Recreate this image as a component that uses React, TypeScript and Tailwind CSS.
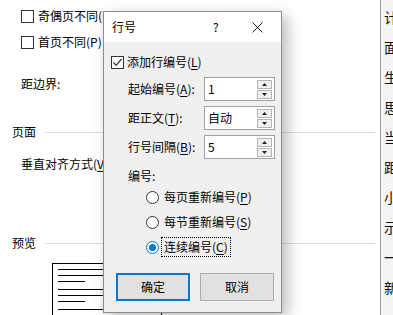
import React from 'react';

const FONT = { fontFamily: '"Noto Sans CJK SC", "Noto Sans", sans-serif' };

function Box({ checked = false }: { checked?: boolean }) {
  return (
    <span className="w-[13px] h-[13px] border border-[#333] bg-white flex items-center justify-center shrink-0">
      {checked && (
        <svg width="11" height="11" viewBox="0 0 11 11">
          <polyline points="1.5,5.5 4.2,8.3 9.5,2" fill="none" stroke="#333" strokeWidth="1.2" />
        </svg>
      )}
    </span>
  );
}

function Radio({ on = false }: { on?: boolean }) {
  return (
    <span
      className={`w-[13px] h-[13px] rounded-full border bg-white flex items-center justify-center shrink-0 ${
        on ? 'border-[#0078d7]' : 'border-[#333]'
      }`}
    >
      {on && <span className="w-[7px] h-[7px] rounded-full bg-[#0078d7]"></span>}
    </span>
  );
}

function Acc({ k }: { k: string }) {
  return (
    <>
      (<span className="underline underline-offset-2">{k}</span>)
    </>
  );
}

function Spin({ value }: { value: string }) {
  return (
    <div className="w-[71px] h-[24px] border border-[#a0a0a0] bg-white flex items-center justify-between pl-[3px] pr-[2px]">
      <span className="text-[12px] leading-[16px]">{value}</span>
      <div className="flex flex-col gap-[1px]">
        <span className="w-[15px] h-[9px] border border-[#b5b5b5] bg-[#f0f0f0] flex items-center justify-center">
          <svg width="5" height="3" viewBox="0 0 5 3"><polygon points="2.5,0 5,3 0,3" fill="#222" /></svg>
        </span>
        <span className="w-[15px] h-[9px] border border-[#b5b5b5] bg-[#f0f0f0] flex items-center justify-center">
          <svg width="5" height="3" viewBox="0 0 5 3"><polygon points="0,0 5,0 2.5,3" fill="#222" /></svg>
        </span>
      </div>
    </div>
  );
}

function PreviewLines() {
  const groups = [0, 1, 2];
  return (
    <div className="flex flex-col gap-[7px] pt-[5px] pl-[5px]">
      {groups.map((g) => (
        <div key={g} className="flex flex-col gap-[5px]">
          <div className="h-[1px] w-[60px] bg-black"></div>
          <div className="h-[1px] w-[60px] bg-black"></div>
          <div className="h-[1px] w-[27px] bg-black"></div>
        </div>
      ))}
    </div>
  );
}

export default function App() {
  const strip = ['计', '面', '生', '思', '当', '距', '小', '示', '一', '新'];

  return (
    <div className="relative w-[393px] h-[315px] overflow-hidden bg-white text-black flex" style={FONT}>
      {/* background: page setup panel */}
      <div className="w-[380px] shrink-0 text-[12px] leading-[16px]">
        <div className="flex items-center gap-[4px] pl-[21px] mt-[8px]">
          <Box />
          <span>奇偶页不同(E)</span>
        </div>
        <div className="flex items-center gap-[4px] pl-[21px] mt-[10px]">
          <Box />
          <span>首页不同(P)</span>
        </div>
        <div className="pl-[21px] mt-[26px]">距边界:</div>

        <div className="flex items-center pl-[12px] pr-[5px] mt-[32px]">
          <span>页面</span>
          <div className="flex-1 h-[1px] bg-[#dcdcdc] ml-[9px]"></div>
        </div>
        <div className="pl-[21px] mt-[16px]">
          垂直对齐方式(<span className="underline underline-offset-2">V</span>):
        </div>

        <div className="flex items-center pl-[12px] pr-[5px] mt-[63px]">
          <span>预览</span>
          <div className="flex-1 h-[1px] bg-[#dcdcdc] ml-[9px]"></div>
        </div>
        <div className="ml-[52px] mt-[12px] w-[110px] h-[80px] border border-black bg-white">
          <PreviewLines />
        </div>
      </div>

      {/* right document strip */}
      <div className="flex-1 border-l border-[#9a9a9a] bg-[#f4f4f4] overflow-hidden pl-[3px]">
        <div className="flex flex-col text-[14px] leading-[30px] pt-[2px] text-[#111] w-[30px]">
          {strip.map((c, i) => (
            <span key={i}>{c}</span>
          ))}
        </div>
      </div>

      {/* 行号 dialog */}
      <div className="absolute left-[103px] top-[11px] w-[179px] h-[302px] border border-[#8c8c8c] bg-[#f0f0f0] shadow-[5px_5px_14px_rgba(0,0,0,0.28)] flex flex-col text-[12px] leading-[16px]">
        <div className="h-[30px] bg-white flex items-center pl-[8px] shrink-0">
          <span className="text-[12px]">行号</span>
          <span className="ml-[77px] text-[12px]">?</span>
          <svg className="ml-[33px]" width="11" height="11" viewBox="0 0 11 11">
            <path d="M0.5 0.5 L10.5 10.5 M10.5 0.5 L0.5 10.5" stroke="#222" strokeWidth="1" />
          </svg>
        </div>

        <div className="flex flex-col">
          <div className="flex items-center gap-[3px] pl-[7px] mt-[12px] h-[16px]">
            <Box checked />
            <span>
              添加行编号<Acc k="L" />
            </span>
          </div>

          <div className="flex flex-col gap-[5px] mt-[7px] pl-[24px]">
            {[
              { label: '起始编号', k: 'A', value: '1' },
              { label: '距正文', k: 'T', value: '自动' },
              { label: '行号间隔', k: 'B', value: '5' },
            ].map((r) => (
              <div key={r.k} className="flex items-center h-[24px]">
                <span className="w-[76px]">
                  {r.label}
                  <Acc k={r.k} />:
                </span>
                <Spin value={r.value} />
              </div>
            ))}
          </div>

          <div className="pl-[24px] mt-[9px] h-[16px]">编号:</div>

          <div className="flex flex-col gap-[5px] mt-[3px] pl-[42px]">
            {[
              { label: '每页重新编号', k: 'P', on: false },
              { label: '每节重新编号', k: 'S', on: false },
              { label: '连续编号', k: 'C', on: true },
            ].map((r) => (
              <div key={r.k} className="flex items-center h-[20px]">
                <Radio on={r.on} />
                <span
                  className={`ml-[2px] px-[2px] py-[1px] ${
                    r.on ? 'border border-dotted border-black' : 'border border-transparent'
                  }`}
                >
                  {r.label}
                  <Acc k={r.k} />
                </span>
              </div>
            ))}
          </div>

          <div className="flex gap-[10px] pl-[12px] mt-[16px]">
            <button className="w-[74px] h-[28px] border-2 border-[#0078d7] bg-[#e1e1e1] text-[12px]">确定</button>
            <button className="w-[74px] h-[28px] border border-[#adadad] bg-[#e1e1e1] text-[12px]">取消</button>
          </div>
        </div>
      </div>
    </div>
  );
}
